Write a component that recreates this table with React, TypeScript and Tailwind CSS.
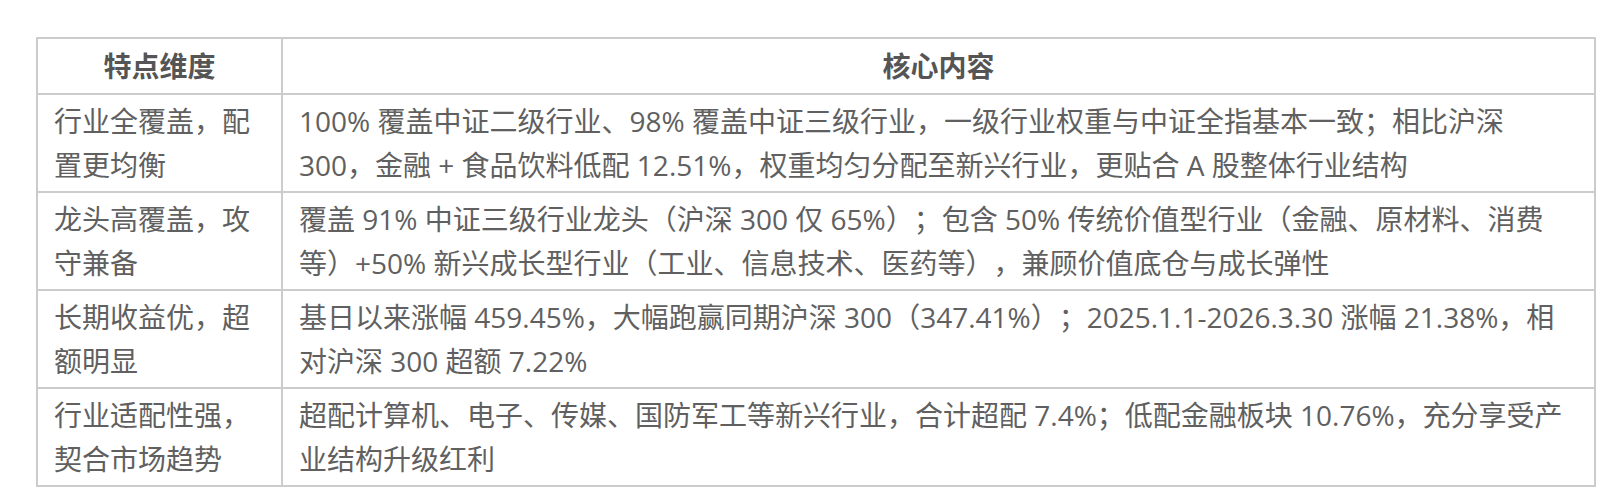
const rows = [
  {
    feature: "行业全覆盖，配置更均衡",
    content:
      "100% 覆盖中证二级行业、98% 覆盖中证三级行业，一级行业权重与中证全指基本一致；相比沪深 300，金融 + 食品饮料低配 12.51%，权重均匀分配至新兴行业，更贴合 A 股整体行业结构",
  },
  {
    feature: "龙头高覆盖，攻守兼备",
    content:
      "覆盖 91% 中证三级行业龙头（沪深 300 仅 65%）；包含 50% 传统价值型行业（金融、原材料、消费等）+50% 新兴成长型行业（工业、信息技术、医药等），兼顾价值底仓与成长弹性",
  },
  {
    feature: "长期收益优，超额明显",
    content:
      "基日以来涨幅 459.45%，大幅跑赢同期沪深 300（347.41%）；2025.1.1-2026.3.30 涨幅 21.38%，相对沪深 300 超额 7.22%",
  },
  {
    feature: "行业适配性强，契合市场趋势",
    content:
      "超配计算机、电子、传媒、国防军工等新兴行业，合计超配 7.4%；低配金融板块 10.76%，充分享受产业结构升级红利",
  },
]

export default function App() {
  return (
    <div className="min-h-[502px] bg-white pt-[37px] pl-[36px] font-['Open_Sans','Noto_Sans_CJK_SC',sans-serif] [text-spacing-trim:space-all]">
      <table className="w-[1560px] table-fixed border-collapse border-2 border-[#cccccc] text-[28px] leading-[44px]">
        <colgroup>
          <col className="w-[245px]" />
          <col />
        </colgroup>
        <thead>
          <tr>
            <th className="border-2 border-[#cccccc] px-4 py-[5px] text-center font-bold text-[#555555]">
              特点维度
            </th>
            <th className="border-2 border-[#cccccc] px-4 py-[5px] text-center font-bold text-[#555555]">
              核心内容
            </th>
          </tr>
        </thead>
        <tbody>
          {rows.map((r) => (
            <tr key={r.feature}>
              <td className="border-2 border-[#cccccc] px-4 py-1 align-top text-[#606060]">
                {r.feature}
              </td>
              <td className="border-2 border-[#cccccc] px-4 py-1 align-top text-[#606060]">
                {r.content}
              </td>
            </tr>
          ))}
        </tbody>
      </table>
    </div>
  )
}
